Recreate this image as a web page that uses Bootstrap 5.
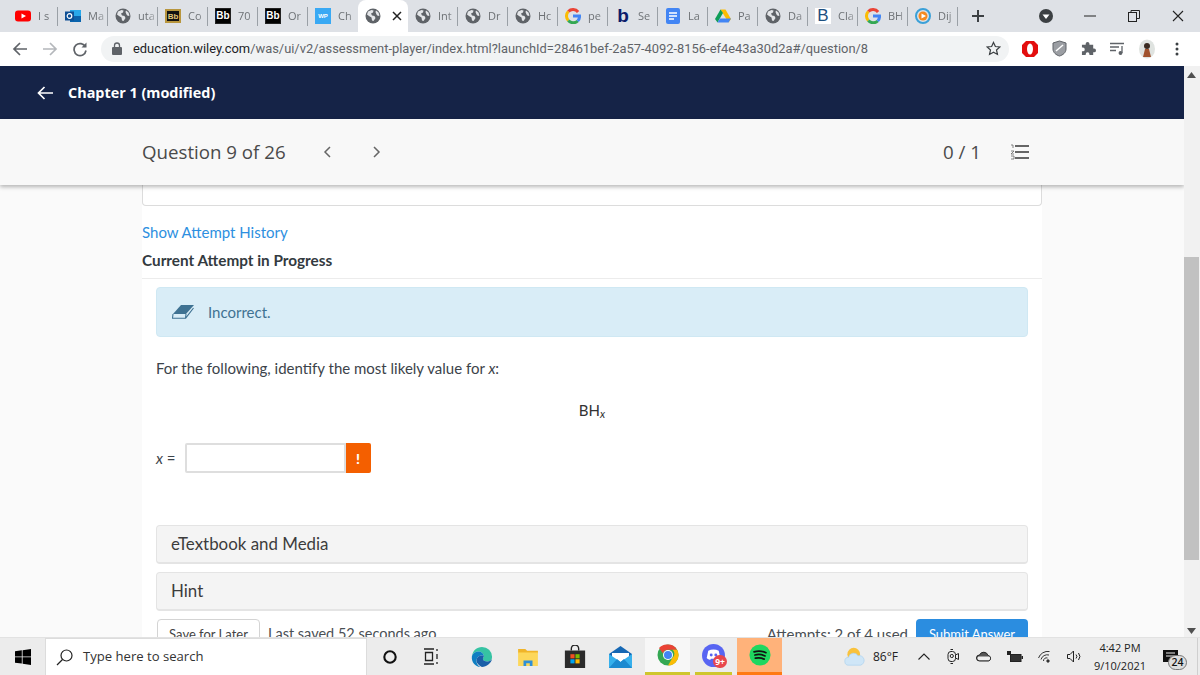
<!DOCTYPE html>
<html lang="en">
<head>
<meta charset="UTF-8">
<title>Chapter 1 (modified)</title>
<link href="https://cdn.jsdelivr.net/npm/bootstrap@5.3.3/dist/css/bootstrap.min.css" rel="stylesheet">
<style>
html, body { margin: 0; height: 100%; overflow: hidden; }
body { font-family: "Lato", sans-serif; color: #3c434a; }
.screen { width: 1200px; height: 675px; }

/* browser tabs */
.tabstrip { height: 32px; background: #dee1e6; padding-left: 8px; font-family: "Open Sans", sans-serif; }
.tabitem { width: 50px; height: 32px; padding-left: 7px; gap: 7px; position: relative; font-size: 11px; color: #6d7175; overflow: hidden; white-space: nowrap; flex: none; }
.tabitem::after { content: ""; position: absolute; right: 0; top: 7px; height: 19px; width: 1px; background: #9aa0a6; }
.tabitem.tab-on { background: #fff; border-radius: 8px 8px 0 0; }
.tabitem.tab-on::after, .tabitem.no-sep::after { display: none; }
.tabname { width: 18px; overflow: hidden; flex: none; -webkit-mask-image: linear-gradient(90deg, #000 55%, rgba(0,0,0,.25)); mask-image: linear-gradient(90deg, #000 55%, rgba(0,0,0,.25)); }
.favi { width: 16px; height: 16px; flex: none; display: block; }
.favi-box { width: 16px; height: 16px; flex: none; font-size: 10px; font-weight: 700; line-height: 16px; text-align: center; font-family: "Liberation Sans", sans-serif; }
.favi-black { background: #000; color: #fff; border: 1px solid #222; line-height: 14px; }
.favi-gold { background: #111; color: #e3c77a; border: 2px solid #b8963e; font-size: 8px; line-height: 12px; height: 14px; }
.favi-wp { background: #39a9f4; color: #fff; font-size: 6px; }
.favi-b { color: #0b1c6b; font-size: 19px; font-family: "Liberation Sans", sans-serif; }
.favi-cl { color: #1c4f80; font-size: 17px; font-weight: 400; background: #fff; }
.newtab { width: 40px; color: #3c4043; }
.winbtn { width: 44px; height: 32px; flex: none; }

/* browser toolbar */
.toolbar { height: 34px; background: #fff; padding-left: 5px; padding-bottom: 1px; font-family: "Roboto", sans-serif; }
.toolcell { width: 30px; height: 30px; flex: none; }
.omnibox { width: 908px; height: 26px; margin-left: 6px; background: #f1f3f4; border-radius: 13px; padding: 0 8px 0 11px; font-size: 12.9px; color: #5f6368; flex: none; white-space: nowrap; }
.omnibox b { font-weight: 400; color: #202124; }
.lockwrap { width: 15px; margin-right: 6px; }
.starwrap { margin-left: auto; }
.ext-first { margin-left: 6px; width: 29px; }
.ext-narrow { width: 29px; }

/* page */
.pagewrap { height: 571px; }
.viewport { width: 1184px; background: #fafafa; overflow: hidden; }
.appbar { height: 53px; background: #152347; color: #fff; padding-left: 37px; font-family: "Open Sans", sans-serif; font-size: 14.4px; font-weight: 700; gap: 15px; }
.qbar { height: 66px; background: #f8f8f8; box-shadow: 0 2px 4px rgba(0,0,0,.28); position: relative; z-index: 2; padding: 0 155px 0 142px; font-family: "Open Sans", sans-serif; font-size: 18.7px; color: #4a4a4a; }
.qnav { margin-left: 37px; gap: 40px; }
.qscore { margin-left: auto; margin-right: 29px; }
.sheet { width: 900px; margin: 0 auto; background: #fff; height: 452px; overflow: hidden; }
.cardstub { height: 21px; border: 1px solid #dcdcdc; border-top: 0; border-radius: 0 0 4px 4px; }
.attempt-link { font-size: 15px; color: #2d8fe0; text-decoration: none; display: block; margin-top: 16px; line-height: 20px; }
.attempt-title { font-size: 15.3px; font-weight: 700; color: #333a40; margin: 8px 0 0; line-height: 20px; padding-bottom: 8px; border-bottom: 1px solid #ececec; }
.qbody { padding: 8px 14px 0; }
.alert.wrong-note { height: 50px; margin: 0; padding: 0 0 0 15px; background: #d9edf7; border: 1px solid #cfe8f3; border-radius: 4px; color: #3f7292; font-size: 15px; gap: 14px; }
.qtext { font-size: 15px; margin: 20px 0 0; line-height: 22px; color: #3c434a; }
.formula { text-align: center; font-size: 15px; margin-top: 20px; line-height: 22px; color: #333; height: 22px; }
.formula sub { font-size: 11px; font-style: italic; bottom: -.2em; }
.answer { margin-top: 22px; font-size: 15px; height: 30px; }
.answer-label { width: 29px; flex: none; }
.answer .input-group { width: 186px; }
.answer .form-control { height: 30px; border: 2px solid #dedede; border-radius: 2px 0 0 2px; padding: 0 6px; }
.warn-btn { width: 26px; height: 30px; background: #f45f00; color: #fff; font-weight: 900; font-size: 14px; border-radius: 0 2px 2px 0; }
.resource { height: 39px; background: #f4f4f4; border: 1px solid #e4e4e4; border-bottom-width: 2px; border-radius: 4px; padding-left: 14px; font-size: 16.9px; color: #3c3c3c; margin-top: 8px; }
.resource-first { margin-top: 52px; }
.actions { margin-top: 8px; font-size: 14.5px; color: #4a4f54; }
.btn.savelater { width: 103px; margin-left: 1px; height: 36px; padding: 0 0 5px; background: #fff; border: 1px solid #d4d4d4; font-size: 13px; color: #444; border-radius: 4px; }
.saved { margin-left: 8px; line-height: 30px; }
.used { margin-right: 8px; line-height: 30px; font-size: 15px; }
.btn.submit { width: 112px; height: 36px; padding: 0 0 5px; background: #2b8de0; border: 0; color: #fff; font-size: 13px; border-radius: 4px; }

.scrolltrack { width: 16px; background: #f1f1f1; flex: none; padding: 4px 1px 0 0; }
.scrollthumb { width: 15px; height: 303px; background: #c1c1c1; flex: none; }
.scrollgap-a { height: 187px; flex: none; padding-top: 2px; }
.scrollgap-b { flex: 1; padding-bottom: 3px; }

/* windows taskbar */
.taskbar { height: 38px; background: #ececec; border-top: 1px solid #e2e2e2; font-family: "Open Sans", sans-serif; color: #222; }
.startcell { width: 45px; flex: none; height: 100%; }
.searchbox { width: 322px; height: 100%; background: #fff; border: 1px solid #dcdcdc; border-bottom: 0; padding-left: 10px; gap: 10px; font-size: 13.1px; flex: none; color: #333; }
.cell { height: 100%; flex: none; }
.w36 { width: 36px; } .w46 { width: 46px; } .w42 { width: 42px; } .w45 { width: 45px; } .w37 { width: 37px; }
.w30 { width: 30px; } .w28 { width: 28px; } .w34 { width: 34px; } .w27 { width: 27px; } .w33 { width: 33px; } .w26 { width: 26px; }
.ml-10 { margin-left: 10px; } .ml-1px { margin-left: 1px; } .ml-5px { margin-left: 5px; } .ml-57 { margin-left: 57px; }
.mailcell { padding-right: 7px; }
.chromecell { background: #f7f7f7; border-bottom: 3px solid #cfc62d; }
.discordcell { border-bottom: 3px solid #cfc62d; position: relative; }
.spotifycell { background: #ffb27a; border-bottom: 3px solid #ff7a14; }
.ninebadge { position: absolute; left: 18px; top: 17px; width: 14px; height: 13px; background: #e8474c; color: #fff; border-radius: 7px; font-size: 8.5px; font-weight: 700; line-height: 13px; text-align: center; }
.tempcell { width: 40px; font-size: 12px; flex: none; padding-left: 4px; }
.clockcell { width: 66px; font-size: 11px; line-height: 18px; text-align: center; flex: none; }
.notecell { width: 44px; position: relative; flex: none; height: 100%; padding-left: 10px; }
.notecount { position: absolute; left: 15px; top: 17px; width: 19px; height: 15px; border-radius: 8px; background: #ddd; border: 1px solid #777; font-size: 10.5px; font-weight: 600; line-height: 13px; text-align: center; color: #111; }
.deskline { width: 4px; height: 100%; border-left: 1px solid #cfcfcf; flex: none; }
</style>
</head>
<body>
<svg width="0" height="0" class="position-absolute">
  <symbol id="globe" viewBox="0 0 16 16">
    <circle cx="8" cy="8" r="7.5" fill="#5f6368"/>
    <path d="M3 3.500l3.500-1.500 2 .5-.5 2-2 1 1 2 2.500.5 1 2-2 3-1.500-.5-.5-3-2.500-1.500-2-1.500zM11 2.500l2.500 2 1 3-1.500.5-1.500-1.500-1-2.500z" fill="#e4e6e9"/>
  </symbol>
  <symbol id="gee" viewBox="0 0 16 16">
    <g fill="none" stroke-width="3">
      <path d="M13.100 4A6.500 6.500 0 0 0 3.300 3.500" stroke="#ea4335"/>
      <path d="M3.300 3.500a6.500 6.500 0 0 0 0 9" stroke="#fbbc05"/>
      <path d="M3.300 12.500a6.500 6.500 0 0 0 9.400.5" stroke="#34a853"/>
      <path d="M12.700 13A6.500 6.500 0 0 0 14.500 8H8" stroke="#4285f4"/>
    </g>
  </symbol>
</svg>

<div class="screen d-flex flex-column">

  <!-- tabs -->
  <div class="tabstrip d-flex align-items-center">
    <div class="tabitem d-flex align-items-center"><svg class="favi" viewBox="0 0 16 16"><rect y="2.500" width="16" height="11" rx="3" fill="#f00"/><path d="M6.500 5.500v5L11 8z" fill="#fff"/></svg><span class="tabname">I s</span></div>
    <div class="tabitem d-flex align-items-center"><svg class="favi" viewBox="0 0 16 16"><rect x="5" y="2" width="11" height="12" fill="#28a8ea"/><rect x="5" y="8" width="11" height="6" fill="#0a64ad"/><rect y="3.500" width="9" height="9" fill="#0f4f94"/><circle cx="4.500" cy="8" r="2.300" fill="none" stroke="#fff" stroke-width="1.200"/></svg><span class="tabname">Ma</span></div>
    <div class="tabitem d-flex align-items-center"><svg class="favi"><use href="#globe"/></svg><span class="tabname">uta</span></div>
    <div class="tabitem d-flex align-items-center"><span class="favi-box favi-gold">Bb</span><span class="tabname">Co</span></div>
    <div class="tabitem d-flex align-items-center"><span class="favi-box favi-black">Bb</span><span class="tabname">70</span></div>
    <div class="tabitem d-flex align-items-center"><span class="favi-box favi-black">Bb</span><span class="tabname">Or</span></div>
    <div class="tabitem no-sep d-flex align-items-center"><span class="favi-box favi-wp">WP</span><span class="tabname">Ch</span></div>
    <div class="tabitem tab-on d-flex align-items-center"><svg class="favi"><use href="#globe"/></svg><svg width="10" height="10" viewBox="0 0 10 10" class="ms-1"><path d="M1 1l8 8M9 1l-8 8" stroke="#222" stroke-width="1.500"/></svg></div>
    <div class="tabitem d-flex align-items-center"><svg class="favi"><use href="#globe"/></svg><span class="tabname">Int</span></div>
    <div class="tabitem d-flex align-items-center"><svg class="favi"><use href="#globe"/></svg><span class="tabname">Dr</span></div>
    <div class="tabitem d-flex align-items-center"><svg class="favi"><use href="#globe"/></svg><span class="tabname">Hc</span></div>
    <div class="tabitem d-flex align-items-center"><svg class="favi"><use href="#gee"/></svg><span class="tabname">pe</span></div>
    <div class="tabitem d-flex align-items-center"><span class="favi-box favi-b">b</span><span class="tabname">Se</span></div>
    <div class="tabitem d-flex align-items-center"><svg class="favi" viewBox="0 0 16 16"><rect x="1" width="14" height="16" rx="2" fill="#4285f4"/><path d="M4 5h8M4 8h8M4 11h5" stroke="#fff" stroke-width="1.500"/></svg><span class="tabname">La</span></div>
    <div class="tabitem d-flex align-items-center"><svg class="favi" viewBox="0 0 16 16"><path d="M5.500 1.500h5L16 11l-2.500 3.500-8-13z" fill="#fbbc04"/><path d="M5.500 1.500L0 11l2.500 3.500L8 5z" fill="#0f9d58"/><path d="M2.500 14.500h11L16 10.500H5z" fill="#4285f4"/></svg><span class="tabname">Pa</span></div>
    <div class="tabitem d-flex align-items-center"><svg class="favi"><use href="#globe"/></svg><span class="tabname">Da</span></div>
    <div class="tabitem d-flex align-items-center"><span class="favi-box favi-cl">B</span><span class="tabname">Cla</span></div>
    <div class="tabitem d-flex align-items-center"><svg class="favi"><use href="#gee"/></svg><span class="tabname">BH</span></div>
    <div class="tabitem d-flex align-items-center"><svg class="favi" viewBox="0 0 16 16"><circle cx="8" cy="8" r="7" fill="none" stroke="#3aa0d8" stroke-width="2"/><circle cx="8" cy="8" r="4.500" fill="#f58a1f"/><path d="M6.500 5.500v5L11 8z" fill="#fff"/></svg><span class="tabname">Dij</span></div>
    <div class="newtab d-flex justify-content-center align-items-center flex-none"><svg width="14" height="14" viewBox="0 0 14 14"><path d="M7 1v12M1 7h12" stroke="#3c4043" stroke-width="2"/></svg></div>
    <div class="ms-auto d-flex align-items-center">
      <div class="winbtn d-flex align-items-center justify-content-center"><svg width="16" height="16" viewBox="0 0 16 16"><circle cx="8" cy="8" r="7" fill="#3c4043"/><path d="M4.500 6.500h7L8 11z" fill="#fff"/></svg></div>
      <div class="winbtn d-flex align-items-center justify-content-center"><svg width="12" height="2" viewBox="0 0 12 2"><path d="M0 1h12" stroke="#222"/></svg></div>
      <div class="winbtn d-flex align-items-center justify-content-center"><svg width="12" height="12" viewBox="0 0 12 12" fill="none" stroke="#222"><rect x=".5" y="2.500" width="8" height="9"/><path d="M3 2.500V.5h8.500v8h-3"/></svg></div>
      <div class="winbtn d-flex align-items-center justify-content-center"><svg width="12" height="12" viewBox="0 0 12 12"><path d="M1 1l10 10M11 1L1 11" stroke="#222" stroke-width="1.100"/></svg></div>
    </div>
  </div>

  <!-- toolbar -->
  <div class="toolbar d-flex align-items-center">
    <div class="toolcell d-flex align-items-center justify-content-center"><svg width="16" height="16" viewBox="0 0 16 16" fill="none" stroke="#5f6368" stroke-width="1.700"><path d="M15 8H2M8 2L2 8l6 6"/></svg></div>
    <div class="toolcell d-flex align-items-center justify-content-center"><svg width="16" height="16" viewBox="0 0 16 16" fill="none" stroke="#b4b7bb" stroke-width="1.700"><path d="M1 8h13M8 2l6 6-6 6"/></svg></div>
    <div class="toolcell d-flex align-items-center justify-content-center"><svg width="16" height="16" viewBox="0 0 16 16" fill="none" stroke="#5f6368" stroke-width="1.700"><path d="M13.500 6A6 6 0 1 0 14 9.500"/><path d="M14.500 1.500V6.500H9.500z" stroke="none" fill="#5f6368"/></svg></div>
    <div class="omnibox d-flex align-items-center">
      <span class="lockwrap d-flex"><svg width="10" height="13" viewBox="0 0 10 13"><rect y="5" width="10" height="8" rx="1" fill="#5f6368"/><path d="M2.500 5V3.500a2.500 2.500 0 0 1 5 0V5" fill="none" stroke="#5f6368" stroke-width="1.300"/></svg></span>
      <span><b>education.wiley.com</b>/was/ui/v2/assessment-player/index.html?launchId=28461bef-2a57-4092-8156-ef4e43a30d2a#/question/8</span>
      <span class="starwrap d-flex"><svg width="15" height="15" viewBox="0 0 16 16"><path d="M8 1.500l2 4.400 4.800.5-3.600 3.200 1 4.700L8 11.900l-4.200 2.400 1-4.700L1.200 6.400 6 5.900z" fill="none" stroke="#3c4043" stroke-width="1.300"/></svg></span>
    </div>
    <div class="toolcell ext-first d-flex align-items-center justify-content-center"><svg width="16" height="18" viewBox="0 0 16 18"><path d="M4 1h8l4 4v8l-4 4H4l-4-4V5z" fill="#e30e0e"/><ellipse cx="8" cy="9" rx="3" ry="5.500" fill="#fff"/></svg></div>
    <div class="toolcell d-flex align-items-center justify-content-center"><svg width="15" height="17" viewBox="0 0 15 17"><path d="M7.500 1L14 3v6c0 3.500-3 6-6.500 7C4 15 1 12.500 1 9V3z" fill="#9b9ea3" stroke="#5f6368"/><path d="M4 11l7-6" stroke="#fff" stroke-width="1.500"/></svg></div>
    <div class="toolcell ext-narrow d-flex align-items-center justify-content-center"><svg width="15" height="15" viewBox="0 0 16 16"><path d="M1 4h4V3a2 2 0 0 1 4 0v1h4v4h1a2 2 0 0 1 0 4h-1v3H9v-1a2 2 0 0 0-4 0v1H1v-4h1a2 2 0 0 0 0-4H1z" fill="#5f6368"/></svg></div>
    <div class="toolcell ext-narrow d-flex align-items-center justify-content-center"><svg width="15" height="13" viewBox="0 0 15 13" fill="none" stroke="#5f6368" stroke-width="1.300"><path d="M0 1.500h14M0 5h9M0 8.500h6M12 4v7"/><circle cx="10.500" cy="11" r="1.300" fill="#5f6368"/></svg></div>
    <div class="toolcell d-flex align-items-center justify-content-center"><svg width="18" height="20" viewBox="0 0 18 20"><ellipse cx="9" cy="10" rx="8" ry="9.500" fill="#dfe3e0"/><circle cx="9" cy="7" r="3" fill="#3a2a20"/><path d="M5 18l2-8h4l2 8z" fill="#a0522d"/></svg></div>
    <div class="toolcell d-flex align-items-center justify-content-center"><svg width="4" height="14" viewBox="0 0 4 14" fill="#3c4043"><circle cx="2" cy="2" r="1.500"/><circle cx="2" cy="7" r="1.500"/><circle cx="2" cy="12" r="1.500"/></svg></div>
  </div>

  <!-- page -->
  <div class="pagewrap d-flex">
    <div class="viewport">
      <div class="appbar d-flex align-items-center">
        <svg width="16" height="14" viewBox="0 0 16 14" fill="none" stroke="#fff" stroke-width="1.700"><path d="M16 7H1.500M7.500 1l-6 6 6 6"/></svg>
        <span>Chapter 1 (modified)</span>
      </div>
      <div class="qbar d-flex align-items-center">
        <span>Question 9 of 26</span>
        <div class="qnav d-flex align-items-center">
          <svg width="9" height="12" viewBox="0 0 9 12" fill="none" stroke="#666" stroke-width="1.500"><path d="M7 1L2 6l5 5"/></svg>
          <svg width="9" height="12" viewBox="0 0 9 12" fill="none" stroke="#666" stroke-width="1.500"><path d="M2 1l5 5-5 5"/></svg>
        </div>
        <span class="qscore">0 / 1</span>
        <svg width="19" height="16" viewBox="0 0 19 16"><path d="M5 2h14M5 8h14M5 14h14" stroke="#666" stroke-width="2"/><path d="M1 1h2v3M1 7h3L1 10h3M1 12h3v3H1" fill="none" stroke="#666" stroke-width=".8"/></svg>
      </div>
      <div class="sheet">
        <div class="cardstub"></div>
        <a class="attempt-link" href="#">Show Attempt History</a>
        <p class="attempt-title">Current Attempt in Progress</p>
        <div class="qbody">
          <div class="alert wrong-note d-flex align-items-center" role="alert">
            <svg width="22" height="14" viewBox="0 0 22 14"><path d="M9 0h13l-8 9H1z" fill="#3f7292"/><path d="M1 9L.5 13.300h13L14 9M13.500 13.300L21.500 3" fill="none" stroke="#3f7292" stroke-width="1.100"/></svg>
            <span>Incorrect.</span>
          </div>
          <p class="qtext">For the following, identify the most likely value for <i>x</i>:</p>
          <div class="formula">BH<sub>x</sub></div>
          <div class="answer d-flex align-items-center">
            <span class="answer-label"><i>x</i> =</span>
            <div class="input-group flex-nowrap">
              <input type="text" class="form-control" aria-label="x">
              <span class="warn-btn d-flex align-items-center justify-content-center">!</span>
            </div>
          </div>
          <div class="resource resource-first d-flex align-items-center">eTextbook and Media</div>
          <div class="resource d-flex align-items-center">Hint</div>
          <div class="actions d-flex align-items-start">
            <button type="button" class="btn savelater">Save for Later</button>
            <span class="saved">Last saved 52 seconds ago</span>
            <span class="used ms-auto">Attempts: 2 of 4 used</span>
            <button type="button" class="btn submit">Submit Answer</button>
          </div>
        </div>
      </div>
    </div>
    <div class="scrolltrack d-flex flex-column">
      <div class="scrollgap-a"><svg class="d-block mx-auto" width="9" height="6" viewBox="0 0 9 6"><path d="M4.500 0L9 6H0z" fill="#505050"/></svg></div>
      <div class="scrollthumb"></div>
      <div class="scrollgap-b d-flex align-items-end justify-content-center"><svg width="9" height="6" viewBox="0 0 9 6"><path d="M0 0h9L4.500 6z" fill="#505050"/></svg></div>
    </div>
  </div>

  <!-- taskbar -->
  <div class="taskbar d-flex align-items-center">
    <div class="startcell d-flex align-items-center justify-content-center"><svg width="16" height="16" viewBox="0 0 16 16" fill="#000"><path d="M0 2.300l6.800-1v6.200H0zM7.600 1.200L16 0v7.500H7.600zM0 8.300h6.800v6.300L0 13.700zM7.600 8.300H16V16l-8.400-1.200z"/></svg></div>
    <div class="searchbox d-flex align-items-center">
      <svg width="17" height="17" viewBox="0 0 17 17" fill="none" stroke="#222" stroke-width="1.200"><circle cx="10.500" cy="6.500" r="5.500"/><path d="M6.500 10.500L1 16"/></svg>
      <span>Type here to search</span>
    </div>
    <div class="cell w46 d-flex align-items-center justify-content-center"><svg width="14" height="14" viewBox="0 0 16 16"><circle cx="8" cy="8" r="6.500" fill="none" stroke="#111" stroke-width="2.400"/></svg></div>
    <div class="cell w36 d-flex align-items-center justify-content-center"><svg width="15" height="17" viewBox="0 0 15 17" fill="none" stroke="#222" stroke-width="1.300"><path d="M0 1h10M0 16h10M1.500 4.500h7v8h-7zM13 1v2M13 6v5M13 14v2"/></svg></div>
    <div class="cell w46 ml-10 d-flex align-items-center justify-content-center"><svg width="22" height="22" viewBox="0 0 24 24"><path d="M12 1a11 11 0 0 1 11 11c0 3-2 5-5 5-3 0-5-1-5-3 0-1 1-1.500 1-3 0-3-3-5-6-5-3 0-6 2-7 5C2 5 6 1 12 1z" fill="#36c3a3"/><path d="M1 11c1-3 4-5 7-5 3 0 6 2 6 5-2-1-7-1-8 4-.5 3 1 6 4 8C5 22.500 0 18 1 11z" fill="#0f7fc2"/><path d="M6 15c1-5 6-5 8-4 0 1.500-1 2-1 3 0 2 2 3 5 3 2 0 4-1 5-3-1 5-6 9-11 9-3-2-6.500-4-6-8z" fill="#1a5fa8"/></svg></div>
    <div class="cell w46 d-flex align-items-center justify-content-center"><svg width="20" height="18" viewBox="0 0 22 20"><path d="M0 1h8l2 2h12v3H0z" fill="#f0b429"/><rect y="5" width="22" height="15" fill="#fdd75a"/><path d="M6 20v-6h10v6h-3v-3H9v3z" fill="#2f8fd8"/></svg></div>
    <div class="cell w46 ml-1px d-flex align-items-center justify-content-center"><svg width="22" height="23" viewBox="0 0 22 25"><path d="M7 6V4a4 4 0 0 1 8 0v2" fill="none" stroke="#222" stroke-width="1.500"/><rect y="6" width="22" height="19" fill="#2b2b2b"/><rect x="6" y="10" width="4.500" height="4.500" fill="#f25022"/><rect x="11.500" y="10" width="4.500" height="4.500" fill="#7fba00"/><rect x="6" y="15.500" width="4.500" height="4.500" fill="#00a4ef"/><rect x="11.500" y="15.500" width="4.500" height="4.500" fill="#ffb900"/></svg></div>
    <div class="cell w42 ml-5px mailcell d-flex align-items-center justify-content-center"><svg width="23" height="22" viewBox="0 0 23 22"><path d="M11.500 0L23 8v14H0V8z" fill="#1668b4"/><path d="M3 7h17v9H3z" fill="#fff"/><path d="M0 8l11.500 8L23 8v14H0z" fill="#36b0ec"/><path d="M0 22l8-9 3.500 3 3.500-3 8 9z" fill="#1c8ad0"/></svg></div>
    <div class="cell w45 chromecell d-flex align-items-center justify-content-center"><svg width="22" height="22" viewBox="0 0 22 22"><circle cx="11" cy="11" r="10.500" fill="#34a853"/><path d="M11 .5a10.500 10.500 0 0 1 9.100 5.250H11a5.200 5.200 0 0 0-5 3.700L2 4A10.500 10.500 0 0 1 11 .5z" fill="#ea4335"/><path d="M20.100 5.750A10.500 10.500 0 0 1 11 21.500l4.500-7.700a5.200 5.200 0 0 0 0-8z" fill="#fbbc05"/><circle cx="11" cy="11" r="5" fill="#fff"/><circle cx="11" cy="11" r="4" fill="#4285f4"/></svg></div>
    <div class="cell w37 ml-5px discordcell d-flex align-items-center justify-content-center"><svg width="23" height="23" viewBox="0 0 22 22"><circle cx="11" cy="11" r="11" fill="#5865f2"/><path d="M6 6.500c3-1.500 7-1.500 10 0l1.500 7c-1 1-2 1.500-3.300 1.800l-.7-1.300h-5l-.7 1.300C6.500 15 5.500 14.500 4.500 13.500z" fill="#fff"/><circle cx="8.800" cy="10.500" r="1.400" fill="#5865f2"/><circle cx="13.200" cy="10.500" r="1.400" fill="#5865f2"/></svg><span class="ninebadge">9+</span></div>
    <div class="cell w45 ml-5px spotifycell d-flex align-items-center justify-content-center"><svg width="22" height="22" viewBox="0 0 24 24"><circle cx="12" cy="12" r="11.500" fill="#1ed760"/><path d="M5.500 8.500c4-1.200 9-1 13 1M6.500 12c3.500-1 7.500-.7 11 1M7 15.500c3-.7 6.500-.5 9.500 1" fill="none" stroke="#111" stroke-width="1.900" stroke-linecap="round"/></svg></div>
    <div class="cell w30 ml-57 d-flex align-items-center justify-content-center"><svg width="21" height="19" viewBox="0 0 26 24"><circle cx="12" cy="9" r="8" fill="#f9c23c"/><path d="M6 23a5 5 0 0 1-.5-10 6.500 6.500 0 0 1 12-2 6 6 0 0 1 3 12z" fill="#cfe6f7" stroke="#a9d0ee" stroke-width=".8"/></svg></div>
    <div class="tempcell d-flex align-items-center">86°F</div>
    <div class="cell w30 d-flex align-items-center justify-content-center"><svg width="12" height="7" viewBox="0 0 12 7" fill="none" stroke="#222" stroke-width="1.100"><path d="M.5 6.500L6 1l5.500 5.500"/></svg></div>
    <div class="cell w28 d-flex align-items-center justify-content-center"><svg width="12" height="15" viewBox="0 0 12 15" fill="none" stroke="#222"><rect x="1" y="2.500" width="7.500" height="10" rx="3"/><path d="M3.500.5h2.500M3.500 14.500h2.500M8.500 6l3-1.500v6l-3-1.500"/><circle cx="4.800" cy="7" r="1.600"/></svg></div>
    <div class="cell w34 d-flex align-items-center justify-content-center"><svg width="16" height="11" viewBox="0 0 16 11"><path d="M3.500 10a3 3 0 0 1 0-6A4.500 4.500 0 0 1 12 4.500 2.800 2.800 0 0 1 12.500 10z" fill="#555" stroke="#222"/><path d="M3.500 9.300h9a2 2 0 0 0 .5-3.800H2.500a2 2 0 0 0 1 3.800z" fill="#eee"/></svg></div>
    <div class="cell w27 d-flex align-items-center justify-content-center"><svg width="16" height="12" viewBox="0 0 16 12"><rect x="3.500" y="3.500" width="10.500" height="7" fill="#333" stroke="#222"/><path d="M0 0h4v4H0zM14.500 5H16v3h-1.500z" fill="#222"/></svg></div>
    <div class="cell w33 d-flex align-items-center justify-content-center"><svg width="13" height="13" viewBox="0 0 13 13" fill="none" stroke="#333" stroke-width="1"><path d="M.5 8a10 10 0 0 1 11-6.500M3 9.500A6.500 6.500 0 0 1 11 5M5.500 11a3 3 0 0 1 4-3"/><circle cx="10" cy="11" r="1.200" fill="#333"/></svg></div>
    <div class="cell w26 d-flex align-items-center justify-content-center"><svg width="15" height="13" viewBox="0 0 15 13" fill="none" stroke="#222"><path d="M.5 4.500h2.500l3.500-3.500v11L3 8.500H.5zM9 4.500a3 3 0 0 1 0 4M11.500 3a5.500 5.500 0 0 1 0 7"/></svg></div>
    <div class="clockcell"><div>4:42 PM</div><div>9/10/2021</div></div>
    <div class="notecell d-flex align-items-center"><svg width="15" height="14" viewBox="0 0 15 14"><rect width="15" height="12" fill="#111"/><path d="M3 3h9M3 6h9" stroke="#eee"/></svg><span class="notecount">24</span></div>
    <div class="deskline"></div>
  </div>
</div>
<script src="https://cdn.jsdelivr.net/npm/bootstrap@5.3.3/dist/js/bootstrap.bundle.min.js"></script>
</body>
</html>
